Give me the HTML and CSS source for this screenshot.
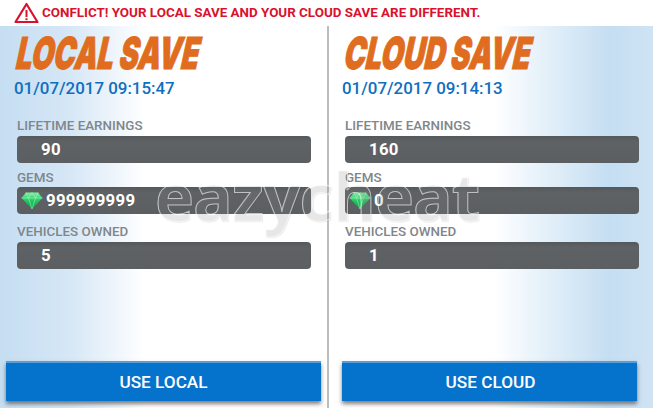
FILE: index.html
```html
<!DOCTYPE html>
<html lang="en">
<head>
    <meta charset="UTF-8">
    <title>Conflict</title>
    <link rel="stylesheet" href="styles.css">
</head>
<body>

<svg width="0" height="0" class="defs">
    <defs>
        <linearGradient id="gem-fill" x1="0" y1="0" x2="0" y2="1">
            <stop offset="0" stop-color="#7df0a0"/>
            <stop offset="0.5" stop-color="#22c864"/>
            <stop offset="1" stop-color="#0fa548"/>
        </linearGradient>
        <symbol id="gem" viewBox="0 0 22 18">
            <path d="M5 1 H17 L21.5 6.5 L11 17.5 L0.5 6.5 Z" fill="url(#gem-fill)"/>
            <path d="M5 1 L7.5 6.5 L11 1 L14.5 6.5 L17 1 M0.5 6.5 H21.5 M7.5 6.5 L11 17.5 L14.5 6.5" fill="none" stroke="#b6f7c8" stroke-width="0.5"/>
        </symbol>
    </defs>
</svg>

<div class="conflict">
    <svg class="warn" width="25" height="22" viewBox="0 0 25 22">
        <path d="M12.5 2 L23.5 20 H1.5 Z" fill="#fff" stroke="#d9122e" stroke-width="2.2" stroke-linejoin="round"/>
        <path d="M12.5 8 V15" stroke="#d9122e" stroke-width="2"/>
        <path d="M12.5 16.2 V18.2" stroke="#d9122e" stroke-width="2"/>
    </svg>
    <span>CONFLICT! YOUR LOCAL SAVE AND YOUR CLOUD SAVE ARE DIFFERENT.</span>
</div>

<div class="saves">
    <section class="save save-local">
        <h2>LOCAL SAVE</h2>
        <p class="stamp">01/07/2017 09:15:47</p>
        <div class="stats">
            <label>LIFETIME EARNINGS</label>
            <div class="bar"><span class="num">90</span></div>
            <label>GEMS</label>
            <div class="bar"><svg class="gem"><use href="#gem"/></svg><span>999999999</span></div>
            <label class="last">VEHICLES OWNED</label>
            <div class="bar"><span class="num">5</span></div>
        </div>
        <button>USE LOCAL</button>
    </section>
    <section class="save save-cloud">
        <h2>CLOUD SAVE</h2>
        <p class="stamp">01/07/2017 09:14:13</p>
        <div class="stats">
            <label>LIFETIME EARNINGS</label>
            <div class="bar"><span class="num">160</span></div>
            <label>GEMS</label>
            <div class="bar"><svg class="gem"><use href="#gem"/></svg><span>0</span></div>
            <label class="last">VEHICLES OWNED</label>
            <div class="bar"><span class="num">1</span></div>
        </div>
        <button>USE CLOUD</button>
    </section>
</div>

<div class="watermark">eazycheat</div>

</body>
</html>
```

FILE: styles.css
```css
* {
    box-sizing: border-box;
}
html, body {
    margin: 0;
    height: 100%;
}
body {
    width: 653px;
    height: 408px;
    overflow: hidden;
    position: relative;
    background: #fff;
    font-family: Roboto, "Liberation Sans", sans-serif;
}
.defs {
    position: absolute;
}
.conflict {
    height: 26px;
    display: flex;
    align-items: center;
    gap: 3px;
    padding: 0 0 1px 14px;
    color: #d9122e;
    font-size: 13.4px;
    font-weight: 700;
    white-space: nowrap;
}
.saves {
    display: flex;
    height: 382px;
}
.save {
    flex: none;
    display: flex;
    flex-direction: column;
    height: 100%;
}
.save-local {
    width: 327px;
    padding-left: 14px;
    background: linear-gradient(90deg, #c5def2 0, #d6e7f6 70px, #ffffff 145px);
}
.save-cloud {
    width: 326px;
    padding-left: 13px;
    border-left: 2px solid #bdbdbd;
    background: linear-gradient(90deg, #ffffff 165px, #e2eff9 220px, #c5def2 280px, #cfe3f4 324px);
}
h2 {
    margin: 5px 0 0 -1px;
    height: 44px;
    color: #e06c20;
    font-family: Inter, "Liberation Sans", sans-serif;
    font-size: 44px;
    line-height: 44px;
    font-weight: 900;
    letter-spacing: 0;
    -webkit-text-stroke: 1px #e06c20;
    white-space: nowrap;
    transform: skewX(-12deg) scaleX(0.655);
    transform-origin: left bottom;
}
.stamp {
    margin: 3px 0 0;
    height: 20px;
    color: #0f6fbe;
    font-size: 16.9px;
    line-height: 20px;
    font-weight: 500;
}
.stats {
    margin: 18px 0 0 3px;
    width: 294px;
}
label {
    display: block;
    height: 19px;
    margin-top: 5px;
    color: #80868b;
    font-size: 13.4px;
    line-height: 19px;
    font-weight: 500;
}
label:first-child {
    margin-top: 0;
    height: 20px;
}
label.last {
    margin-top: 8px;
    height: 20px;
}
.bar {
    height: 27px;
    display: flex;
    align-items: center;
    padding: 0 0 1px 4px;
    border-radius: 4px;
    background: linear-gradient(180deg, #55585b, #5f6265 20%, #5c5f62);
    color: #fff;
    font-size: 16.8px;
    font-weight: 700;
    letter-spacing: 0.3px;
}
.bar .num {
    padding-left: 20px;
}
.gem {
    width: 22px;
    height: 19px;
    margin-right: 3px;
}
button {
    display: block;
    margin: 92px 0 0 -8px;
    width: 315px;
    height: 40px;
    border: 0;
    border-top: 2px solid #5a9ed8;
    background: #0573cb;
    box-shadow: 0 3px 4px rgba(70, 60, 50, 0.65);
    color: #fff;
    font-family: Roboto, "Liberation Sans", sans-serif;
    font-size: 17.2px;
    font-weight: 500;
}
.save-cloud button {
    margin-left: 0;
    width: 295px;
    padding-left: 8px;
}
.watermark {
    position: absolute;
    left: 155px;
    top: 155px;
    color: rgba(255, 255, 255, 0.1);
    font-family: "Open Sans", sans-serif;
    font-size: 66px;
    line-height: 80px;
    font-weight: 700;
    letter-spacing: -1px;
    -webkit-text-stroke: 1px rgba(255, 255, 255, 0.6);
    text-shadow: 1px 1px 1px rgba(0, 0, 0, 0.1);
}
```
